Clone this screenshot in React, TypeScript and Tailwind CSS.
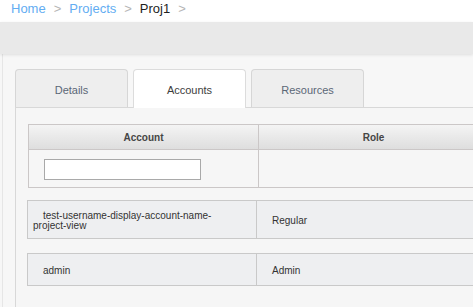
import React from "react";

export default function App() {
  const font = "font-['Liberation_Sans',Arial,Helvetica,sans-serif]";
  return (
    <div className={`w-[473px] h-[307px] overflow-hidden bg-[#f7f7f7] ${font}`}>
      {/* breadcrumb */}
      <div className="h-[22px] bg-white pt-[1px] pl-[11px] flex items-start text-[13px] leading-[15px] whitespace-nowrap">
        <span className="text-[#63adf2]">Home</span>
        <span className="mx-[8px] text-[#b5b5b5]">&gt;</span>
        <span className="text-[#63adf2]">Projects</span>
        <span className="mx-[8px] text-[#b5b5b5]">&gt;</span>
        <span className="text-[#1e1e1e]">Proj1</span>
        <span className="mx-[8px] text-[#b5b5b5]">&gt;</span>
      </div>
      {/* toolbar */}
      <div className="relative z-10 h-[32px] bg-[#e9e9e9] shadow-[0_1px_3px_rgba(0,0,0,0.10)]"></div>
      {/* content */}
      <div className="ml-[2px] border-l border-[#e6e6e6] h-[253px] pt-[15px] pl-[12px]">
        {/* tabs */}
        <div className="flex gap-[5px] h-[38px] text-[11px] leading-[13px]">
          <div className="w-[113px] h-[38px] border border-b-0 border-[#d6d6d6] rounded-t-[4px] bg-[#eeeeee] text-center pt-[14px] text-[#5b6776]">
            Details
          </div>
          <div className="relative z-10 w-[113px] h-[39px] border border-b-0 border-[#dcdcdc] rounded-t-[4px] bg-white text-center pt-[14px] text-[#3d3d3d]">
            Accounts
          </div>
          <div className="w-[113px] h-[38px] border border-b-0 border-[#d6d6d6] rounded-t-[4px] bg-[#eeeeee] text-center pt-[14px] text-[#5b6776]">
            Resources
          </div>
        </div>
        {/* panel */}
        <div className="w-[600px] h-[200px] border-l border-t border-[#d8d8d8] bg-[#f6f6f6] pt-[16px] pl-[12px] text-[10px] leading-[10px]">
          {/* header + filter */}
          <div className="w-[461px] border border-[#cbc7c7]">
            <div className="flex h-[25px] bg-gradient-to-b from-[#f4f4f4] to-[#dedede] border-b border-[#cbc7c7] font-bold text-[#454545]">
              <div className="w-[230px] border-r border-[#cbc7c7] flex items-center justify-center pt-[1px]">Account</div>
              <div className="flex-1 flex items-center justify-center pt-[1px]">Role</div>
            </div>
            <div className="flex h-[37px]">
              <div className="w-[230px] border-r border-[#cbc7c7] pl-[15px] pt-[9px]">
                <input className="block w-[157px] h-[21px] border border-[#a9a9a9] bg-white outline-none" />
              </div>
              <div className="flex-1"></div>
            </div>
          </div>
          {/* row 1 */}
          <div className="mt-[12px] -ml-px w-[462px] h-[39px] flex border border-[#c9c9c9] bg-[#eeeff1] text-[#333]">
            <div className="w-[229px] border-r border-[#c9c9c9] pl-[5px] pr-[14px] indent-[10px] flex items-center pt-[2px]">
              <span className="block">test-username-display-account-name-project-view</span>
            </div>
            <div className="flex-1 pl-[5px] indent-[10px] flex items-center pt-[2px]">Regular</div>
          </div>
          {/* row 2 */}
          <div className="mt-[14px] -ml-px w-[462px] h-[33px] flex border border-[#c9c9c9] bg-[#eeeff1] text-[#333]">
            <div className="w-[229px] border-r border-[#c9c9c9] pl-[5px] indent-[10px] flex items-center pt-[2px]">admin</div>
            <div className="flex-1 pl-[5px] indent-[10px] flex items-center pt-[2px]">Admin</div>
          </div>
        </div>
      </div>
    </div>
  );
}
